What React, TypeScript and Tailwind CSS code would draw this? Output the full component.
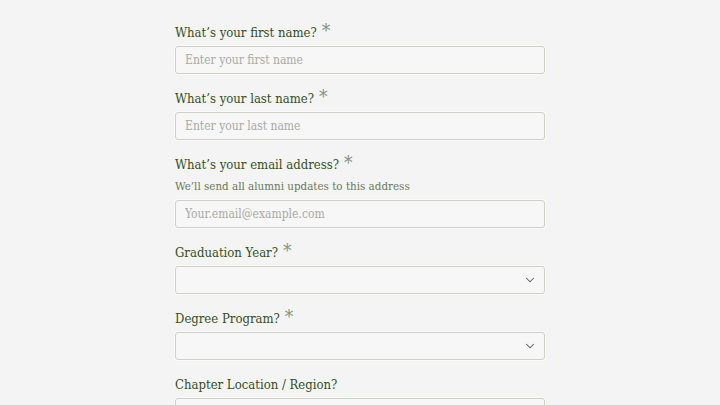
import { ChevronDown } from 'lucide-react';

const font = { fontFamily: '"DejaVu Serif Condensed", "DejaVu Serif", "Liberation Serif", serif' };

const inputCls =
  'block w-full h-[28px] border border-[#cdd1c6] rounded-[3px] bg-[#f7f7f7] shadow-[0_0_0_1px_#fafafa] px-[9px] text-[12px] text-[#33501c] placeholder:text-[#a9aaa4] outline-none';

function Label({ text, required }: { text: string; required?: boolean }) {
  return (
    <div className="flex items-center h-[16px]">
      <span className="text-[13px] leading-[16px] text-[#33501c]">{text}</span>
      {required && <span className="ml-[5px] -mt-[6px] text-[19px] leading-[16px] text-[#86937a]">*</span>}
    </div>
  );
}

export default function App() {
  return (
    <div className="h-screen w-full bg-[#f4f4f4] overflow-hidden" style={font}>
      <div className="w-[370px] ml-[175px] pt-[25px] flex flex-col">
        <div className="mb-[17px]">
          <Label text="What’s your first name?" required />
          <input className={`${inputCls} mt-[5px]`} placeholder="Enter your first name" />
        </div>
        <div className="mb-[17px]">
          <Label text="What’s your last name?" required />
          <input className={`${inputCls} mt-[5px]`} placeholder="Enter your last name" />
        </div>
        <div className="mb-[17px]">
          <Label text="What’s your email address?" required />
          <div className="mt-[5px] text-[11.5px] leading-[16px] text-[#6a7a58]">
            We’ll send all alumni updates to this address
          </div>
          <input className={`${inputCls} mt-[6px]`} placeholder="Your.email@example.com" />
        </div>
        <div className="mb-[17px]">
          <Label text="Graduation Year?" required />
          <div className={`${inputCls} mt-[5px] flex items-center justify-end pr-[7px]`}>
            <ChevronDown size={14} strokeWidth={1.75} className="text-[#555a50]" />
          </div>
        </div>
        <div className="mb-[17px]">
          <Label text="Degree Program?" required />
          <div className={`${inputCls} mt-[5px] flex items-center justify-end pr-[7px]`}>
            <ChevronDown size={14} strokeWidth={1.75} className="text-[#555a50]" />
          </div>
        </div>
        <div>
          <Label text="Chapter Location / Region?" />
          <div className={`${inputCls} mt-[5px]`} />
        </div>
      </div>
    </div>
  );
}
